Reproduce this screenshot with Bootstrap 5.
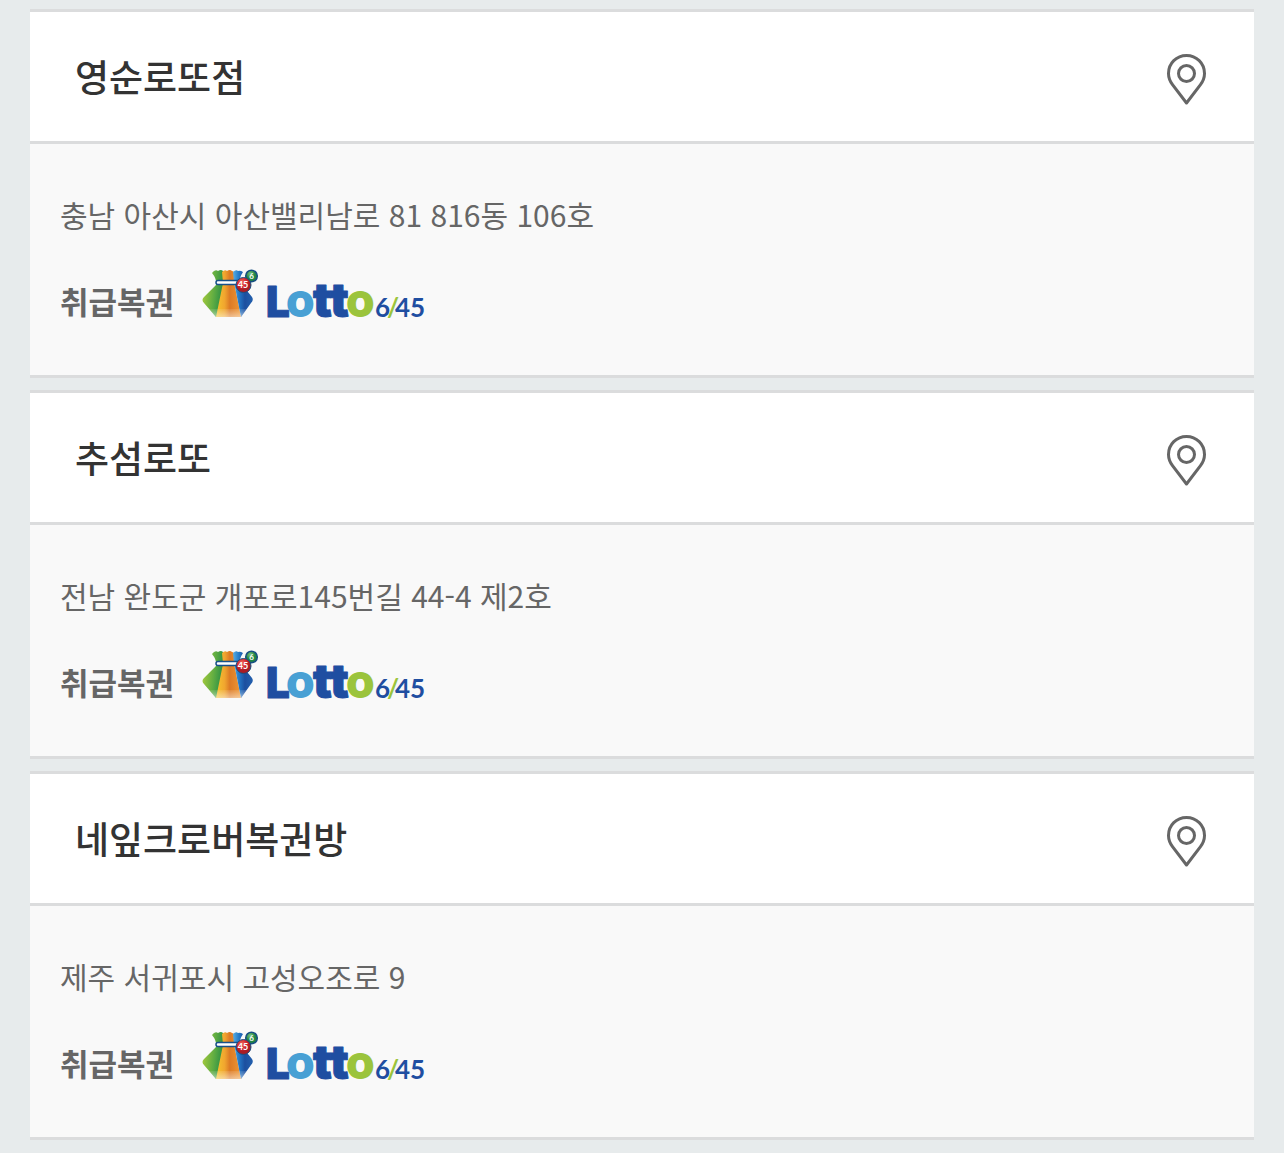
<!DOCTYPE html>
<html lang="ko">
<head>
<meta charset="utf-8">
<meta name="viewport" content="width=device-width, initial-scale=1">
<title>로또 판매점</title>
<link href="https://cdn.jsdelivr.net/npm/bootstrap@5.3.0/dist/css/bootstrap.min.css" rel="stylesheet">
<style>
  body { background: #e7ebec; color: #666; font-family: "Noto Sans CJK KR", sans-serif; }
  .store-list { padding: 9px 30px 12px; gap: 12px; }
  .store { background: #f9f9f9; border-top: 3px solid #dbdcdd; border-bottom: 3px solid #dbdcdd; }
  .store-head { background: #fff; border-bottom: 3px solid #dbdcdd; padding: 36px 48px 36px 45px; }
  .store-name { color: #333; font-size: 37px; font-weight: 500; line-height: 57px; }
  .store-body { padding: 46px 30px 44px; }
  .store-address { font-size: 30px; line-height: 48px; margin-bottom: 31px; }
  .store-label { font-size: 31px; font-weight: 700; line-height: 48px; padding-top: 8px; }
  .store-goods { gap: 28px; height: 62px; }
  .pin-link { padding-top: 6px; }
  .pin { width: 39px; height: 51px; }
  .lotto { width: 224px; height: 50px; }
</style>
</head>
<body>
<svg width="0" height="0" class="position-absolute" aria-hidden="true">
  <defs>
    <linearGradient id="green" x1="0" x2="1" y1=".3" y2=".5"><stop offset="0" stop-color="#a9cb3c"/><stop offset=".55" stop-color="#5fac42"/><stop offset="1" stop-color="#238a45"/></linearGradient>
    <linearGradient id="orange" x1="0" x2="1"><stop offset="0" stop-color="#f6c52d"/><stop offset=".35" stop-color="#f0a52f"/><stop offset=".55" stop-color="#dc7a25"/><stop offset="1" stop-color="#ef9834"/></linearGradient>
    <linearGradient id="blue" x1="0" x2="1"><stop offset="0" stop-color="#57aee4"/><stop offset=".3" stop-color="#2479c7"/><stop offset=".6" stop-color="#1c4f9f"/><stop offset="1" stop-color="#2360ae"/></linearGradient>
    <linearGradient id="shine" x1="0" x2="0" y1="0" y2="1"><stop offset="0" stop-color="#fff" stop-opacity=".1"/><stop offset="1" stop-color="#fff" stop-opacity=".5"/></linearGradient>
    <radialGradient id="redball" cx=".4" cy=".3"><stop offset="0" stop-color="#ee6a5d"/><stop offset=".7" stop-color="#cf2229"/><stop offset="1" stop-color="#a91c25"/></radialGradient>
    <radialGradient id="greenball" cx=".4" cy=".3"><stop offset="0" stop-color="#7cc47f"/><stop offset=".8" stop-color="#218544"/></radialGradient>
    <symbol id="pin" viewBox="0 0 39 51">
      <path d="M19.500 1.500C9.500 1.500 1.500 9.300 1.500 19.500c0 4.200 1.500 7.800 4 11.200L19.500 49l14-18.300c2.500-3.400 4-7 4-11.200C37.500 9.300 29.500 1.500 19.500 1.500Z" fill="none" stroke="#666" stroke-width="3" stroke-linejoin="round"/>
      <circle cx="19.500" cy="19.500" r="8" fill="none" stroke="#666" stroke-width="3"/>
    </symbol>
    <symbol id="lotto" viewBox="0 0 224 50">
      <path d="M10 4q3-4 6-2 3-2 5 0L22 13 15 48H14L2 34Q-1 31 2 28L14 16Q15 10 10 4Z" fill="url(#green)"/>
      <path d="M20 3q3-3 5-1 3-2 5 0 2 0 2 2L32 13 39 48H14L21 14Z" fill="url(#orange)"/>
      <path d="M31 3q3-3 5-1 2-1 5 1Q37 9 38 13L50 28Q52 31 49 34L39 48 32 13Z" fill="url(#blue)"/>
      <path d="M7 40H45L39 48H14Z" fill="url(#shine)"/>
      <rect x="14" y="11.500" width="24" height="4" rx="2" fill="#fff" stroke="#17508b" stroke-width="1.500"/>
      <circle cx="49.500" cy="7" r="5.800" fill="url(#greenball)" stroke="#164f83" stroke-width="1.500"/>
      <circle cx="41.500" cy="16" r="7.500" fill="url(#redball)" stroke="#164f83" stroke-width="1"/>
      <g font-family="Lato, sans-serif" font-weight="700" fill="#fff" text-anchor="middle">
        <text x="49.500" y="10" font-size="8">6</text>
        <text x="41" y="19" font-size="9">45</text>
      </g>
      <g font-family="Inter, sans-serif" font-weight="900" fill="#1f4ea1" stroke="#1f4ea1" stroke-width="1" stroke-linejoin="round">
        <text x="64" y="48" font-size="42">L</text>
        <text x="111" y="48" font-size="47">t</text>
        <text x="128" y="48" font-size="47">t</text>
      </g>
      <g font-family="Lato, sans-serif" font-weight="900" font-size="46" stroke-width="2">
        <text x="85" y="47" fill="#48a0d4" stroke="#48a0d4">o</text>
        <text x="145" y="47" fill="#9bc43c" stroke="#9bc43c">o</text>
      </g>
      <text x="173 185 193 208" y="48" font-family="Lato, sans-serif" font-weight="700" font-size="26" fill="#1f4ea1">6<tspan fill="#9bc43c">/</tspan>45</text>
    </symbol>
  </defs>
</svg>

<main class="store-list d-flex flex-column">
  <article class="store">
    <header class="store-head d-flex align-items-center justify-content-between">
      <h2 class="store-name mb-0">영순로또점</h2>
      <button type="button" class="pin-link btn px-0 pb-0 border-0 d-flex" aria-label="영순로또점 위치 보기"><svg class="pin"><use href="#pin"/></svg></button>
    </header>
    <div class="store-body">
      <p class="store-address">충남 아산시 아산밸리남로 81 816동 106호</p>
      <div class="store-goods d-flex align-items-start">
        <strong class="store-label">취급복권</strong>
        <svg class="lotto" role="img" aria-label="Lotto 6/45"><use href="#lotto"/></svg>
      </div>
    </div>
  </article>

  <article class="store">
    <header class="store-head d-flex align-items-center justify-content-between">
      <h2 class="store-name mb-0">추섬로또</h2>
      <button type="button" class="pin-link btn px-0 pb-0 border-0 d-flex" aria-label="추섬로또 위치 보기"><svg class="pin"><use href="#pin"/></svg></button>
    </header>
    <div class="store-body">
      <p class="store-address">전남 완도군 개포로145번길 44-4 제2호</p>
      <div class="store-goods d-flex align-items-start">
        <strong class="store-label">취급복권</strong>
        <svg class="lotto" role="img" aria-label="Lotto 6/45"><use href="#lotto"/></svg>
      </div>
    </div>
  </article>

  <article class="store">
    <header class="store-head d-flex align-items-center justify-content-between">
      <h2 class="store-name mb-0">네잎크로버복권방</h2>
      <button type="button" class="pin-link btn px-0 pb-0 border-0 d-flex" aria-label="네잎크로버복권방 위치 보기"><svg class="pin"><use href="#pin"/></svg></button>
    </header>
    <div class="store-body">
      <p class="store-address">제주 서귀포시 고성오조로 9</p>
      <div class="store-goods d-flex align-items-start">
        <strong class="store-label">취급복권</strong>
        <svg class="lotto" role="img" aria-label="Lotto 6/45"><use href="#lotto"/></svg>
      </div>
    </div>
  </article>
</main>
<script src="https://cdn.jsdelivr.net/npm/bootstrap@5.3.0/dist/js/bootstrap.bundle.min.js"></script>
</body>
</html>
